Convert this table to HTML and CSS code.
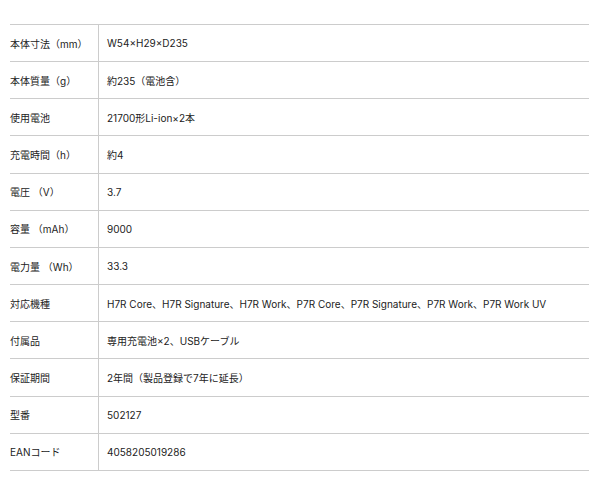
FILE: index.html
```html
<!DOCTYPE html>
<html lang="ja">
<head>
<meta charset="utf-8">
<link rel="stylesheet" href="styles.css">
</head>
<body>
<div class="spec">
  <div class="row"><div class="label">本体寸法（mm）</div><div class="value">W54×H29×D235</div></div>
  <div class="row"><div class="label">本体質量（g）</div><div class="value">約235（電池含）</div></div>
  <div class="row"><div class="label">使用電池</div><div class="value">21700形Li-ion×2本</div></div>
  <div class="row"><div class="label">充電時間（h）</div><div class="value">約4</div></div>
  <div class="row"><div class="label">電圧 （V）</div><div class="value">3.7</div></div>
  <div class="row"><div class="label">容量 （mAh）</div><div class="value">9000</div></div>
  <div class="row"><div class="label">電力量 （Wh）</div><div class="value">33.3</div></div>
  <div class="row"><div class="label">対応機種</div><div class="value">H7R Core、H7R Signature、H7R Work、P7R Core、P7R Signature、P7R Work、P7R Work UV</div></div>
  <div class="row"><div class="label">付属品</div><div class="value">専用充電池×2、USBケーブル</div></div>
  <div class="row"><div class="label">保証期間</div><div class="value">2年間（製品登録で7年に延長）</div></div>
  <div class="row"><div class="label">型番</div><div class="value">502127</div></div>
  <div class="row"><div class="label">EANコード</div><div class="value">4058205019286</div></div>
</div>
</body>
</html>
```
FILE: styles.css
```css
html, body {
  margin: 0;
  padding: 0;
  background: #ffffff;
}
body {
  font-family: Inter, "Noto Sans CJK JP", sans-serif;
  font-size: 10px;
  color: #222222;
}
.spec {
  margin: 24px 11px 0 10px;
  border-top: 1px solid #cccccc;
}
.row {
  display: grid;
  grid-template-columns: 89px 1fr;
  height: 37.17px;
  box-sizing: border-box;
  border-bottom: 1px solid #cccccc;
}
.label {
  display: flex;
  align-items: center;
  border-right: 1px solid #cccccc;
  white-space: nowrap;
}
.value {
  display: flex;
  align-items: center;
  padding-left: 8px;
  white-space: nowrap;
}
```
